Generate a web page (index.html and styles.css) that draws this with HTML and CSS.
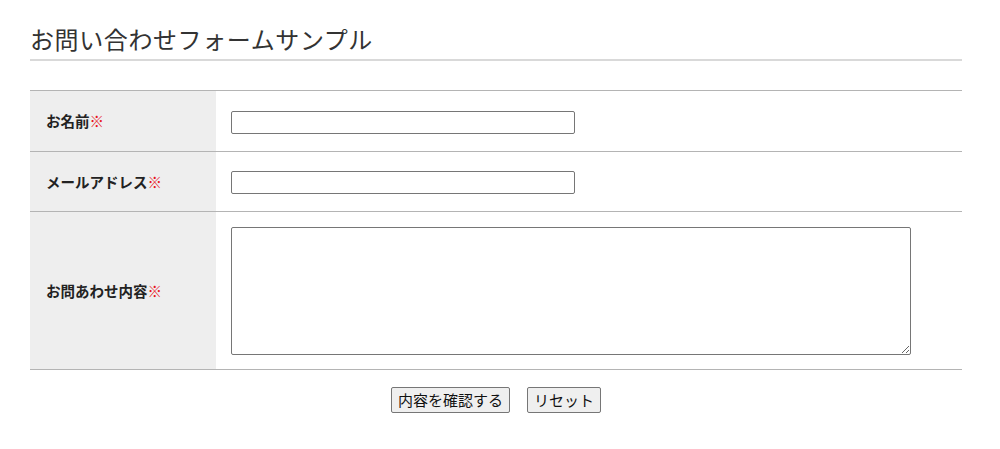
FILE: index.html
```html
<!DOCTYPE html>
<html lang="ja">
<head>
<meta charset="utf-8">
<title>お問い合わせフォームサンプル</title>
<link rel="stylesheet" href="styles.css">
</head>
<body>
<div class="page">
  <h1 class="title">お問い合わせフォームサンプル</h1>
  <form class="form">
    <table class="form-table">
      <tr class="row">
        <th class="label">お名前<span class="req">※</span></th>
        <td class="field"><input class="text-input" type="text"></td>
      </tr>
      <tr class="row">
        <th class="label">メールアドレス<span class="req">※</span></th>
        <td class="field"><input class="text-input" type="text"></td>
      </tr>
      <tr class="row">
        <th class="label">お問あわせ内容<span class="req">※</span></th>
        <td class="field field-area"><textarea class="textarea"></textarea></td>
      </tr>
    </table>
    <div class="actions">
      <button type="button" class="btn">内容を確認する</button>
      <button type="reset" class="btn">リセット</button>
    </div>
  </form>
</div>
</body>
</html>
```

FILE: styles.css
```css
html, body {
  margin: 0;
  padding: 0;
  background: #fff;
}
body {
  font-family: "Noto Sans CJK JP", "Noto Sans", sans-serif;
  color: #333;
}
.page {
  width: 932px;
  margin-left: 30px;
}
.title {
  margin: 22px 0 0;
  padding: 0 0 3px 0;
  font-size: 24px;
  letter-spacing: 0.6px;
  line-height: 34px;
  font-weight: normal;
  color: #333;
  border-bottom: 2px solid #d9d9d9;
}
.form {
  margin: 29px 0 0;
}
.form-table {
  width: 100%;
  border-collapse: collapse;
  border-top: 1px solid #b4b4b4;
}
.row {
  border-bottom: 1px solid #b4b4b4;
}
.label {
  width: 170px;
  height: 59.5px;
  padding: 0 0 0 16px;
  background: #eeeeee;
  text-align: left;
  vertical-align: middle;
  font-size: 14.5px;
  font-weight: bold;
  color: #222;
  white-space: nowrap;
}
.req {
  color: #e8141c;
  font-weight: bold;
}
.field {
  padding: 3px 0 0 15px;
  vertical-align: middle;
}
.field-area {
  padding-top: 15px;
  padding-bottom: 14px;
}
.text-input {
  display: block;
  box-sizing: border-box;
  width: 344px;
  height: 23px;
  margin: 0;
  border: 1px solid #767676;
  border-radius: 2px;
  padding: 1px 2px;
  font-size: 13px;
}
.textarea {
  display: block;
  box-sizing: border-box;
  width: 680px;
  height: 128px;
  margin: 0;
  border: 1px solid #767676;
  border-radius: 2px;
  padding: 2px;
}
.actions {
  display: flex;
  justify-content: center;
  gap: 17px;
  margin-top: 17px;
}
.btn {
  font-family: "Noto Sans CJK JP", sans-serif;
  font-size: 15px;
  line-height: 22px;
  padding: 1px 6px;
  margin: 0;
  color: #111;
  background: #efefef;
  border: 1px solid #767676;
  border-radius: 2px;
}
```
